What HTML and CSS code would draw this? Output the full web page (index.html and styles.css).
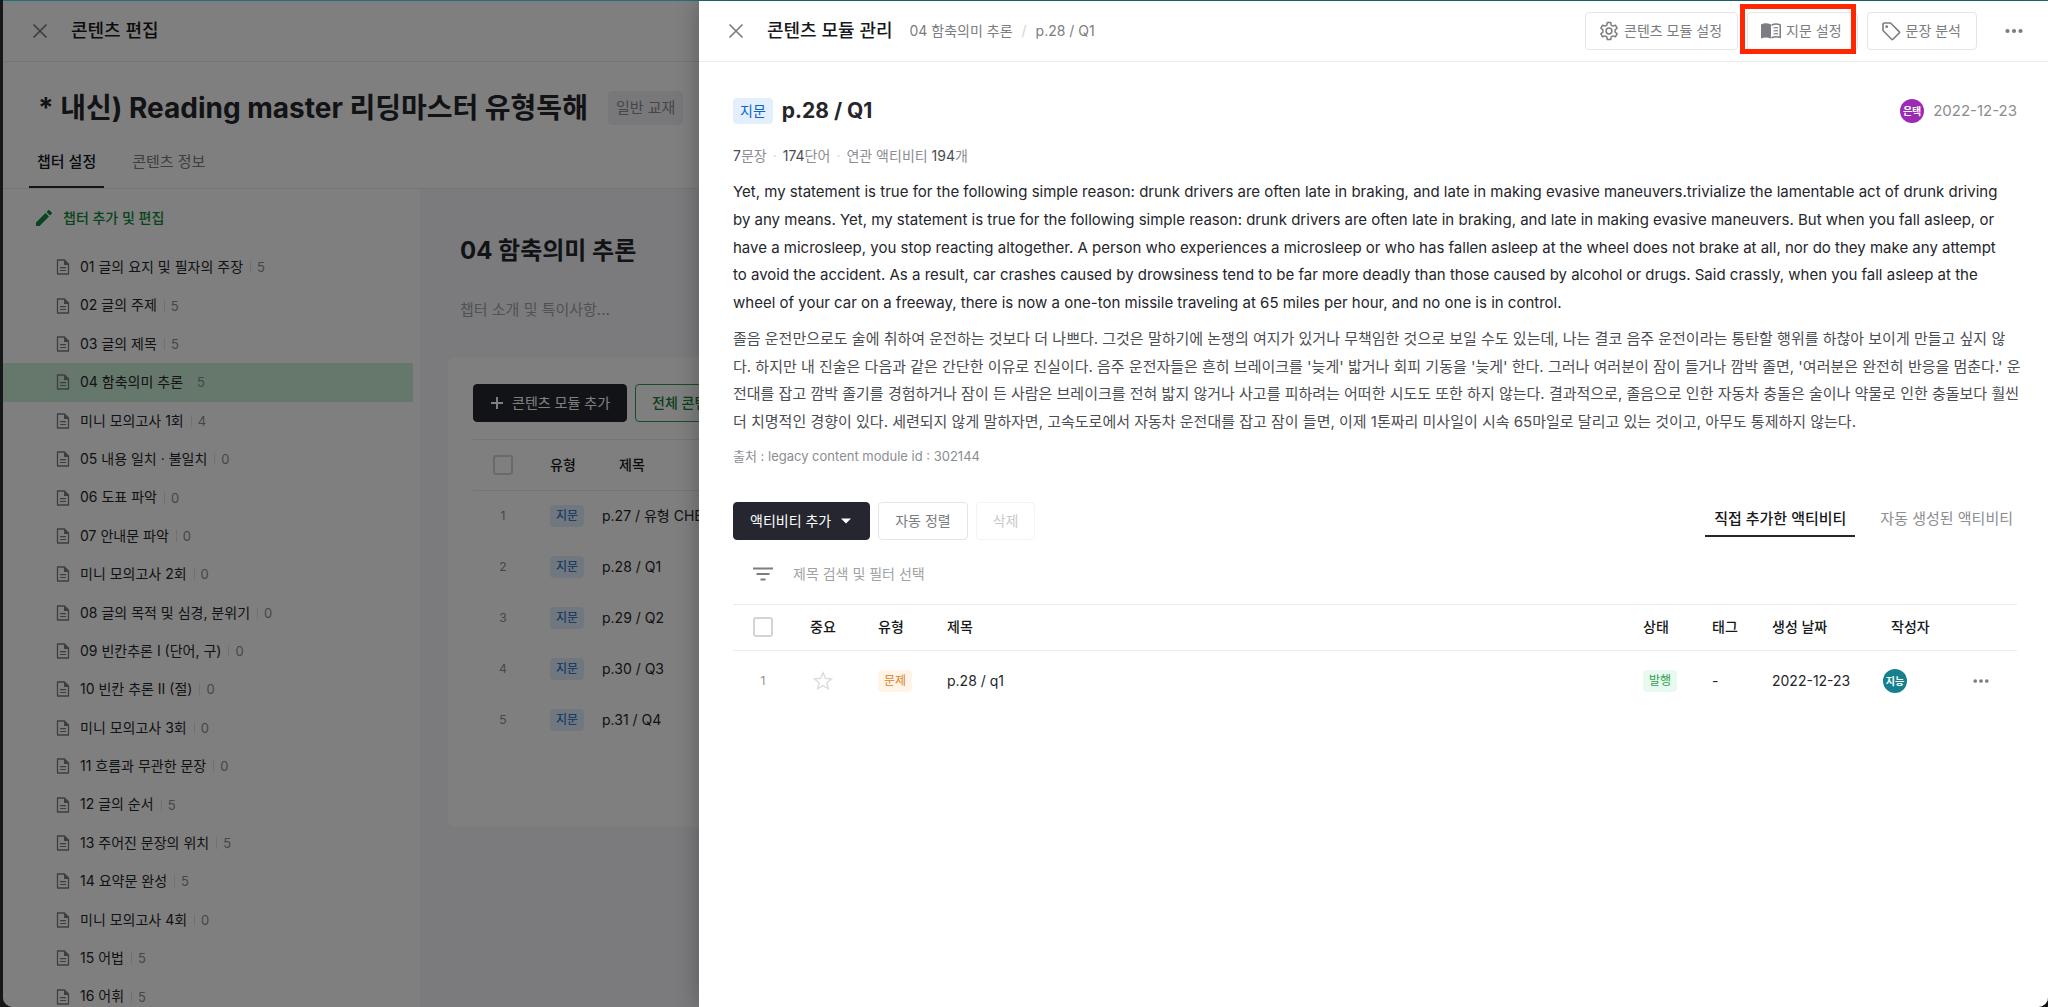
FILE: index.html
```html
<!DOCTYPE html>
<html lang="ko">
<head>
  <meta charset="UTF-8">
  <meta name="viewport" content="width=device-width, initial-scale=1.0">
  <title>콘텐츠 편집</title>
  <link rel="stylesheet" href="styles.css">
</head>
<body>
  <svg class="sprite" aria-hidden="true">
    <symbol id="i-close" viewBox="0 0 16 16"><path d="M1.5 1.5l13 13M14.5 1.5l-13 13" fill="none" stroke="currentColor" stroke-width="1.7"/></symbol>
    <symbol id="i-doc" viewBox="0 0 14 16"><path d="M1.5 1h7L12.500 5v10h-11z" fill="none" stroke="currentColor" stroke-width="1.3" stroke-linejoin="round"/><path d="M8 1l5 5H8z" fill="currentColor"/><path d="M4 8.600h6M4 11.500h6" stroke="currentColor" stroke-width="1.200"/></symbol>
    <symbol id="i-dots" viewBox="0 0 18 6"><circle cx="2.500" cy="3" r="2.100"/><circle cx="9" cy="3" r="2.100"/><circle cx="15.500" cy="3" r="2.100"/></symbol>
  </svg>

  <div class="window">
    <header class="bar">
      <button class="icon-btn" aria-label="닫기"><svg class="close"><use href="#i-close"/></svg></button>
      <h2>콘텐츠 편집</h2>
    </header>
    <div class="book">
      <h1>* 내신) Reading master 리딩마스터 유형독해</h1>
      <span class="kind">일반 교재</span>
    </div>
    <nav class="book-tabs">
      <a href="#chapters" class="on">챕터 설정</a>
      <a href="#info">콘텐츠 정보</a>
    </nav>

    <div class="columns">
      <aside class="side">
        <button class="edit-chapters">
          <svg viewBox="0 0 18 18"><path d="M1 13.500V17h3.500L14 7.500 10.500 4z M16.700 4.800a1 1 0 0 0 0-1.300l-2.200-2.200a1 1 0 0 0-1.300 0L11.500 3 15 6.500z"/></svg>
          챕터 추가 및 편집
        </button>
        <ul class="chapters">
          <li><svg><use href="#i-doc"/></svg>01 글의 요지 및 필자의 주장<small>5</small></li>
          <li><svg><use href="#i-doc"/></svg>02 글의 주제<small>5</small></li>
          <li><svg><use href="#i-doc"/></svg>03 글의 제목<small>5</small></li>
          <li class="on"><svg><use href="#i-doc"/></svg>04 함축의미 추론<small>5</small></li>
          <li><svg><use href="#i-doc"/></svg>미니 모의고사 1회<small>4</small></li>
          <li><svg><use href="#i-doc"/></svg>05 내용 일치 · 불일치<small>0</small></li>
          <li><svg><use href="#i-doc"/></svg>06 도표 파악<small>0</small></li>
          <li><svg><use href="#i-doc"/></svg>07 안내문 파악<small>0</small></li>
          <li><svg><use href="#i-doc"/></svg>미니 모의고사 2회<small>0</small></li>
          <li><svg><use href="#i-doc"/></svg>08 글의 목적 및 심경, 분위기<small>0</small></li>
          <li><svg><use href="#i-doc"/></svg>09 빈칸추론 I (단어, 구)<small>0</small></li>
          <li><svg><use href="#i-doc"/></svg>10 빈칸 추론 II (절)<small>0</small></li>
          <li><svg><use href="#i-doc"/></svg>미니 모의고사 3회<small>0</small></li>
          <li><svg><use href="#i-doc"/></svg>11 흐름과 무관한 문장<small>0</small></li>
          <li><svg><use href="#i-doc"/></svg>12 글의 순서<small>5</small></li>
          <li><svg><use href="#i-doc"/></svg>13 주어진 문장의 위치<small>5</small></li>
          <li><svg><use href="#i-doc"/></svg>14 요약문 완성<small>5</small></li>
          <li><svg><use href="#i-doc"/></svg>미니 모의고사 4회<small>0</small></li>
          <li><svg><use href="#i-doc"/></svg>15 어법<small>5</small></li>
          <li><svg><use href="#i-doc"/></svg>16 어휘<small>5</small></li>
        </ul>
      </aside>

      <main class="chapter">
        <h2>04 함축의미 추론</h2>
        <p class="intro">챕터 소개 및 특이사항...</p>
        <section class="card">
          <div class="card-actions">
            <button class="btn dark"><svg class="plus" viewBox="0 0 14 14"><path d="M7 1v12M1 7h12" stroke="currentColor" stroke-width="2"/></svg>콘텐츠 모듈 추가</button>
            <button class="btn green">전체 콘텐츠 발행</button>
          </div>
          <table class="modules">
            <thead>
              <tr><th class="num"><input type="checkbox" aria-label="전체 선택"></th><th class="type">유형</th><th class="name">제목</th></tr>
            </thead>
            <tbody>
              <tr><td class="num">1</td><td class="type"><span class="tag blue">지문</span></td><td>p.27 / 유형 CHECK</td></tr>
              <tr><td class="num">2</td><td class="type"><span class="tag blue">지문</span></td><td>p.28 / Q1</td></tr>
              <tr><td class="num">3</td><td class="type"><span class="tag blue">지문</span></td><td>p.29 / Q2</td></tr>
              <tr><td class="num">4</td><td class="type"><span class="tag blue">지문</span></td><td>p.30 / Q3</td></tr>
              <tr><td class="num">5</td><td class="type"><span class="tag blue">지문</span></td><td>p.31 / Q4</td></tr>
            </tbody>
          </table>
        </section>
      </main>
    </div>
    <div class="dim"></div>
  </div>

  <div class="drawer">
    <header class="bar">
      <button class="icon-btn" aria-label="닫기"><svg class="close"><use href="#i-close"/></svg></button>
      <h2>콘텐츠 모듈 관리</h2>
      <div class="crumbs"><a href="#chapter">04 함축의미 추론</a><i>/</i><a href="#module">p.28 / Q1</a></div>
      <div class="tools">
        <button class="btn">
          <svg viewBox="0 0 20 20"><path d="M8.300 1.500h3.400l.5 2.600 1.700 1 2.500-.9 1.700 3-2 1.700v2.200l2 1.700-1.700 3-2.500-.9-1.700 1-.5 2.600H8.300l-.5-2.600-1.700-1-2.500.9-1.700-3 2-1.700V8.900l-2-1.700 1.700-3 2.500.9 1.700-1z" fill="none" stroke="currentColor" stroke-width="1.500" stroke-linejoin="round"/><circle cx="10" cy="10" r="2.900" fill="none" stroke="currentColor" stroke-width="1.500"/></svg>
          콘텐츠 모듈 설정
        </button>
        <button class="btn marked">
          <svg viewBox="0 0 20 20"><path d="M0 3.500c3-1.600 6.500-1.600 10 0v14c-3.500-1.500-7-1.500-10 0z"/><path d="M10.500 4.200c3-1.400 6-1.400 8.700-.2v12.400c-2.700-1-5.700-1-8.700.4" fill="none" stroke="currentColor" stroke-width="1.500"/><path d="M12.500 7c1.500-.5 3-.5 4.500-.2M12.500 10c1.500-.5 3-.5 4.500-.2M12.500 13c1.500-.5 3-.5 4.500-.2" fill="none" stroke="currentColor" stroke-width="1.300"/></svg>
          지문 설정
        </button>
        <button class="btn">
          <svg viewBox="0 0 20 20"><path d="M2 3.300A1.300 1.300 0 0 1 3.300 2H9.500L18.200 10.600a1 1 0 0 1 0 1.400L12 18.200a1 1 0 0 1-1.400 0L2 9.500z" fill="none" stroke="currentColor" stroke-width="1.600" stroke-linejoin="round"/><circle cx="5.700" cy="5.700" r="1.400"/></svg>
          문장 분석
        </button>
        <button class="icon-btn" aria-label="더보기"><svg class="dots"><use href="#i-dots"/></svg></button>
      </div>
    </header>

    <div class="detail">
      <div class="title-row">
        <span class="tag blue big">지문</span>
        <h3>p.28 / Q1</h3>
        <span class="avatar purple">은택</span>
        <time>2022-12-23</time>
      </div>
      <p class="stats"><b>7</b>문장<i>·</i><b>174</b>단어<i>·</i>연관 액티비티 <b>194</b>개</p>
      <p class="passage" lang="en">
        Yet, my statement is true for the following simple reason: drunk drivers are often late in braking, and late in making evasive maneuvers.trivialize the lamentable act of drunk driving<br>
        by any means. Yet, my statement is true for the following simple reason: drunk drivers are often late in braking, and late in making evasive maneuvers. But when you fall asleep, or<br>
        have a microsleep, you stop reacting altogether. A person who experiences a microsleep or who has fallen asleep at the wheel does not brake at all, nor do they make any attempt<br>
        to avoid the accident. As a result, car crashes caused by drowsiness tend to be far more deadly than those caused by alcohol or drugs. Said crassly, when you fall asleep at the<br>
        wheel of your car on a freeway, there is now a one-ton missile traveling at 65 miles per hour, and no one is in control.
      </p>
      <p class="passage ko">
        졸음 운전만으로도 술에 취하여 운전하는 것보다 더 나쁘다. 그것은 말하기에 논쟁의 여지가 있거나 무책임한 것으로 보일 수도 있는데, 나는 결코 음주 운전이라는 통탄할 행위를 하찮아 보이게 만들고 싶지 않<br>다. 하지만 내 진술은 다음과 같은 간단한 이유로 진실이다. 음주 운전자들은 흔히 브레이크를 '늦게' 밟거나 회피 기동을 '늦게' 한다. 그러나 여러분이 잠이 들거나 깜박 졸면, '여러분은 완전히 반응을 멈춘다.' 운<br>전대를 잡고 깜박 졸기를 경험하거나 잠이 든 사람은 브레이크를 전혀 밟지 않거나 사고를 피하려는 어떠한 시도도 또한 하지 않는다. 결과적으로, 졸음으로 인한 자동차 충돌은 술이나 약물로 인한 충돌보다 훨씬<br>더 치명적인 경향이 있다. 세련되지 않게 말하자면, 고속도로에서 자동차 운전대를 잡고 잠이 들면, 이제 1톤짜리 미사일이 시속 65마일로 달리고 있는 것이고, 아무도 통제하지 않는다.
      </p>
      <p class="source">출처 : legacy content module id : 302144</p>

      <div class="activity-bar">
        <button class="btn dark">액티비티 추가<svg class="caret" viewBox="0 0 10 6"><path d="M0 .5h10L5 5.500z"/></svg></button>
        <button class="btn">자동 정렬</button>
        <button class="btn" disabled>삭제</button>
        <nav class="activity-tabs">
          <a href="#manual" class="on">직접 추가한 액티비티</a>
          <a href="#auto">자동 생성된 액티비티</a>
        </nav>
      </div>
      <div class="filter">
        <svg viewBox="0 0 20 14"><path d="M0 1.500h20M3.500 7h13M7.500 12.500h5" stroke="currentColor" stroke-width="2"/></svg>
        <input type="text" placeholder="제목 검색 및 필터 선택" aria-label="제목 검색 및 필터 선택">
      </div>
      <table class="activities">
        <thead>
          <tr>
            <th class="num"><input type="checkbox" aria-label="전체 선택"></th>
            <th class="star">중요</th>
            <th class="type">유형</th>
            <th>제목</th>
            <th class="state">상태</th>
            <th class="label">태그</th>
            <th class="date">생성 날짜</th>
            <th class="author">작성자</th>
            <th class="more"></th>
          </tr>
        </thead>
        <tbody>
          <tr>
            <td class="num">1</td>
            <td class="star"><svg viewBox="0 0 20 20"><path d="M10 1.800l2.400 5.500 6 .6-4.500 4 1.300 5.900-5.200-3.100-5.200 3.100 1.300-5.900-4.500-4 6-.6z" fill="none" stroke="currentColor" stroke-width="1.500"/></svg></td>
            <td class="type"><span class="tag orange">문제</span></td>
            <td>p.28 / q1</td>
            <td class="state"><span class="tag mint">발행</span></td>
            <td class="label">-</td>
            <td class="date">2022-12-23</td>
            <td class="author"><span class="avatar teal">지능</span></td>
            <td class="more"><button class="icon-btn" aria-label="더보기"><svg class="dots"><use href="#i-dots"/></svg></button></td>
          </tr>
        </tbody>
      </table>
    </div>
  </div>
</body>
</html>
```
FILE: styles.css
```css
* {
  box-sizing: border-box;
}
body {
  margin: 0;
  height: 100vh;
  overflow: hidden;
  background: #17171a;
  font-family: Inter, "Noto Sans CJK KR", sans-serif;
  font-size: 14px;
  line-height: 20px;
  color: #25262b;
}
h1, h2, h3, p, ul {
  margin: 0;
  padding: 0;
}
a {
  color: inherit;
  text-decoration: none;
}
i {
  font-style: normal;
}
svg {
  fill: currentColor;
  flex: none;
}
button {
  font: inherit;
  cursor: pointer;
}
.sprite {
  display: none;
}

/* shared pieces */
.bar {
  display: flex;
  align-items: center;
  height: 61px;
  padding: 0 22px 0 25px;
  border-bottom: 1px solid #ebebeb;
}
.bar h2 {
  margin-left: 19px;
  font-size: 18px;
  font-weight: 500;
  color: #17181b;
}
.icon-btn {
  display: flex;
  align-items: center;
  justify-content: center;
  width: 24px;
  height: 24px;
  padding: 0;
  border: 0;
  background: none;
  color: #7b7d81;
}
.close {
  width: 16px;
  height: 16px;
}
.dots {
  width: 18px;
  height: 6px;
}
.btn {
  display: flex;
  align-items: center;
  height: 38px;
  padding: 0 16px;
  border: 1px solid #e4e5e7;
  border-radius: 4px;
  background: #fff;
  color: #7b7d81;
  white-space: nowrap;
}
.btn.dark {
  border-color: #25262f;
  background: #25262f;
  color: #fff;
}
.btn.green {
  border-color: #2f9e50;
  color: #14803a;
  font-weight: 500;
}
.btn:disabled {
  border-color: #f3f3f4;
  color: #c8c9cb;
}
.tag {
  display: inline-block;
  padding: 0 6px;
  border-radius: 4px;
  font-size: 12px;
  line-height: 22px;
}
.tag.blue {
  background: #e3effd;
  color: #0b63c5;
}
.tag.orange {
  background: #fff4e6;
  color: #d9822b;
}
.tag.mint {
  background: #e8faef;
  color: #2f9e50;
}
.tag.big {
  padding: 0 7px;
  font-size: 14px;
  line-height: 26px;
}
.avatar {
  display: inline-flex;
  align-items: center;
  justify-content: center;
  width: 24px;
  height: 24px;
  border-radius: 50%;
  color: #fff;
  font-size: 10px;
  font-weight: 700;
}
.avatar.purple {
  background: #9c2ab3;
}
.avatar.teal {
  background: #15818f;
}
table {
  width: 100%;
  border-collapse: collapse;
  table-layout: fixed;
}
th, td {
  padding: 0;
  text-align: left;
  vertical-align: middle;
}
th {
  font-weight: 500;
  color: #17181b;
}
thead tr {
  border-top: 1px solid #ebebeb;
  border-bottom: 1px solid #ebebeb;
}
th.num, td.num {
  text-align: center;
  font-size: 12px;
  color: #8b8d91;
}
input[type="checkbox"] {
  appearance: none;
  display: block;
  width: 20px;
  height: 20px;
  margin: 0 auto;
  border: 2px solid #d3d4d6;
  border-radius: 3px;
}

/* page behind */
.window {
  position: relative;
  height: 100vh;
  margin-left: 3px;
  overflow: hidden;
  border-top: 1px solid #1f6f7c;
  border-radius: 0 0 10px 10px;
  background: #fff;
}
.dim {
  position: absolute;
  inset: 0;
  background: rgba(0, 0, 0, 0.5);
}
.book {
  display: flex;
  align-items: center;
  gap: 20px;
  padding: 28px 35px 0;
}
.book h1 {
  font-size: 28px;
  line-height: 36px;
  font-weight: 700;
}
.kind {
  padding: 0 8px;
  border-radius: 4px;
  background: #f0f0f4;
  color: #8b8d91;
  font-size: 15px;
  line-height: 34px;
}
.book-tabs {
  display: flex;
  gap: 20px;
  padding: 12px 26px 0;
  font-size: 15px;
  line-height: 48px;
  color: #7b7d81;
}
.book-tabs a {
  padding: 0 8px;
}
.book-tabs .on {
  border-bottom: 2px solid #25262b;
  font-weight: 500;
  color: #17181b;
}
.columns {
  display: grid;
  grid-template-columns: 417px 1fr;
  border-top: 1px solid #ebebeb;
}
.side {
  padding: 16px 7px 0 0;
}
.edit-chapters {
  display: flex;
  align-items: center;
  gap: 10px;
  padding: 3px 32px;
  border: 0;
  background: none;
  color: #0f8a3c;
  font-weight: 500;
}
.edit-chapters svg {
  width: 18px;
  height: 18px;
}
.chapters {
  margin-top: 17px;
  list-style: none;
}
.chapters li {
  display: flex;
  align-items: center;
  padding: 8px 53px;
  line-height: 1.6;
  white-space: nowrap;
}
.chapters svg {
  width: 14px;
  height: 16px;
  margin-right: 10px;
  color: #7b7d81;
}
.chapters .on {
  background: #cdf0d8;
}
.chapters small {
  margin-left: 7px;
  padding-left: 6px;
  border-left: 1px solid #e2e3e5;
  font-size: 13px;
  line-height: 12px;
  color: #8b8d91;
}
.chapter {
  padding: 44px 28px 180px;
  background: #f6f6fa;
}
.chapter h2 {
  padding: 0 12px;
  font-size: 24px;
  line-height: 36px;
}
.intro {
  padding: 31px 12px 0;
  font-size: 15px;
  color: #a0a2a6;
}
.card {
  height: 470px;
  margin-top: 37px;
  padding: 27px 28px 0 25px;
  border-radius: 8px;
  background: #fff;
}
.card-actions {
  display: flex;
  gap: 8px;
}
.plus {
  width: 14px;
  height: 14px;
  margin-right: 8px;
}
.modules {
  margin-top: 17px;
}
.modules tr {
  height: 51px;
}
.modules .num {
  width: 60px;
}
.modules .type {
  width: 69px;
  padding-left: 17px;
}
.modules .name {
  padding-left: 17px;
}

/* module drawer */
.drawer {
  position: absolute;
  top: 1px;
  bottom: 0;
  left: 699px;
  right: 0;
  overflow: hidden;
  border-bottom-right-radius: 10px;
  background: #fff;
  box-shadow: 0 0 24px rgba(0, 0, 0, 0.3);
}
.crumbs {
  display: flex;
  gap: 9px;
  margin-left: 17px;
  color: #7b7d81;
}
.crumbs i {
  color: #d3d4d6;
}
.tools {
  display: flex;
  align-items: center;
  gap: 9px;
  margin-left: auto;
}
.tools .btn {
  gap: 5px;
  padding: 0 15px 0 13px;
}
.tools .btn svg {
  width: 20px;
  height: 20px;
}
.tools .icon-btn {
  margin-left: 16px;
}
.marked {
  position: relative;
}
.marked::after {
  content: "";
  position: absolute;
  inset: -9px 1px -5px -8px;
  border: 5px solid #ff2600;
}
.detail {
  padding: 31px 31px 0 34px;
}
.title-row {
  display: flex;
  align-items: center;
  gap: 9px;
  height: 36px;
}
.title-row h3 {
  margin-right: auto;
  font-size: 21px;
  font-weight: 700;
}
.title-row time {
  font-size: 15px;
  color: #8b8d91;
}
.stats {
  margin-top: 17px;
  color: #8b8d91;
}
.stats b {
  font-weight: 400;
  color: #4b4d52;
}
.stats i {
  padding: 0 6px;
  color: #d3d4d6;
}
.passage {
  margin-top: 12px;
  font-size: 15px;
  line-height: 1.85;
  white-space: nowrap;
}
.passage.ko {
  margin-top: 8px;
  color: #4b4d52;
}
.source {
  margin-top: 10px;
  font-size: 13px;
  color: #8b8d91;
}
.activity-bar {
  display: flex;
  gap: 8px;
  margin-top: 36px;
}
.caret {
  width: 10px;
  height: 6px;
  margin-left: 10px;
  margin-right: 2px;
}
.activity-tabs {
  display: flex;
  gap: 16px;
  margin-left: auto;
  font-size: 15px;
  line-height: 34px;
  color: #8b8d91;
}
.activity-tabs a {
  height: 35px;
  padding: 0 9px;
}
.activity-tabs a:last-child {
  padding-right: 4px;
}
.activity-tabs .on {
  border-bottom: 2px solid #25262b;
  font-weight: 500;
  color: #17181b;
}
.filter {
  display: flex;
  align-items: center;
  gap: 20px;
  height: 64px;
  padding: 4px 0 0 20px;
  color: #7b7d81;
}
.filter svg {
  width: 20px;
  height: 14px;
}
.filter input {
  flex: 1;
  padding: 0;
  border: 0;
  outline: 0;
  font: inherit;
}
.filter input::placeholder {
  color: #a0a2a6;
}
.activities thead tr {
  height: 46px;
}
.activities tbody tr {
  height: 61px;
}
.activities .num {
  width: 60px;
}
.activities .star {
  width: 85px;
  padding-left: 17px;
}
td.star svg {
  display: block;
  width: 20px;
  height: 20px;
  margin-left: 3px;
  color: #dcdddf;
}
.activities .type {
  width: 69px;
}
.activities .state {
  width: 69px;
}
.activities .label {
  width: 60px;
}
.activities .date {
  width: 111px;
}
.activities .author {
  width: 86px;
}
th.author {
  padding-left: 8px;
}
.activities .more {
  width: 48px;
}
.more .dots {
  width: 16px;
}
```
